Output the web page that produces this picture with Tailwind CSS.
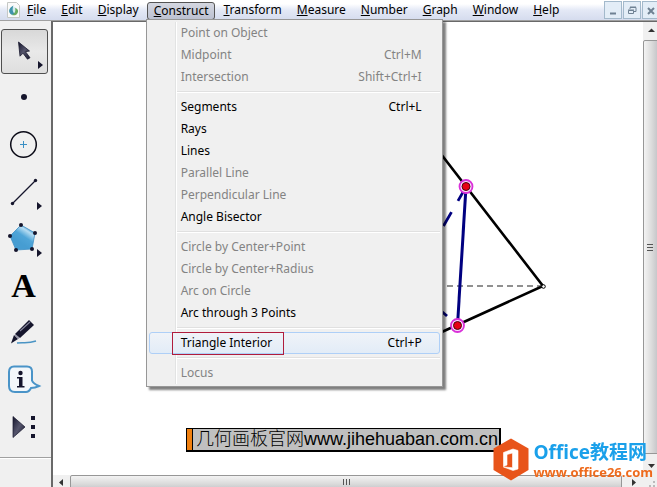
<!DOCTYPE html>
<html lang="en">
<head>
  <meta charset="UTF-8" />
  <meta name="viewport" content="width=device-width, initial-scale=1.0" />
  <title>Sketchpad</title>
  <script src="https://cdn.jsdelivr.net/npm/@tailwindcss/browser@4"></script>
</head>
<body class="h-screen flex flex-col overflow-hidden bg-[#f0f0f0] text-black text-[12px] font-['Noto_Sans','Noto_Sans_CJK_SC',sans-serif]">
  <!-- menu bar -->
  <header class="relative z-20 flex items-center h-5 shrink-0 bg-linear-to-b from-white from-20% via-[#e4e9f6] via-50% to-[#d5dcee]">
    <svg class="ml-[7px] w-[13px] h-4 shrink-0" viewBox="0 0 13 16">
      <path d="M.5.5h9l3 3v12H.5z" fill="#fafafa" stroke="#c5c8c5" />
      <circle cx="6.500" cy="9" r="4" fill="#d3ebee" />
      <path d="M6.500 3.500C3 5 1.500 8 2.500 10.500c1 2.500 4 3 5.500 1.500C5.500 10.500 5 7 6.500 3.500z" fill="#3f93ab" />
      <path d="M8 6c3.500 1 4 4 1.500 6.500-1.500 1-3.500 1-4.500.5C8 11 9 9 8 6z" fill="#67ab62" />
    </svg>
    <nav class="flex h-full items-center gap-px">
      <button class="px-[7px]"><u>F</u>ile</button>
      <button class="px-[7px]"><u>E</u>dit</button>
      <button class="px-[7px]"><u>D</u>isplay</button>
      <div class="relative h-5 flex items-center">
        <button class="px-[6px] h-[18px] mt-px border border-[#555] rounded-[3px] bg-linear-to-b from-[#d4d7e0] to-[#bcc1d1] leading-4"><u>C</u>onstruct</button>
        <!-- open menu -->
        <div class="absolute -left-px top-[19px] w-[297px] border border-[#979797] bg-[#f0f0f0] py-[2px] px-[2px] shadow-[3px_3px_2px_rgba(0,0,0,0.5)]">
          <div class="absolute left-7 inset-y-[2px] w-[2px] border-l border-[#e2e3e3] bg-white"></div>
          <ul class="relative text-[#838383]">
            <li><button class="flex justify-between items-center w-full h-[22px] pl-8 pr-[18px]" disabled>Point on Object</button></li>
            <li><button class="flex justify-between items-center w-full h-[22px] pl-8 pr-[18px]" disabled>Midpoint<span>Ctrl+M</span></button></li>
            <li><button class="flex justify-between items-center w-full h-[22px] pl-8 pr-[18px]" disabled>Intersection<span>Shift+Ctrl+I</span></button></li>
            <li class="ml-7 my-[3px] h-[2px] border-t border-[#e0e0e0] bg-white"></li>
            <li><button class="flex justify-between items-center w-full h-[22px] pl-8 pr-[18px] text-black">Segments<span>Ctrl+L</span></button></li>
            <li><button class="flex justify-between items-center w-full h-[22px] pl-8 pr-[18px] text-black">Rays</button></li>
            <li><button class="flex justify-between items-center w-full h-[22px] pl-8 pr-[18px] text-black">Lines</button></li>
            <li><button class="flex justify-between items-center w-full h-[22px] pl-8 pr-[18px]" disabled>Parallel Line</button></li>
            <li><button class="flex justify-between items-center w-full h-[22px] pl-8 pr-[18px]" disabled>Perpendicular Line</button></li>
            <li><button class="flex justify-between items-center w-full h-[22px] pl-8 pr-[18px] text-black">Angle Bisector</button></li>
            <li class="ml-7 my-[3px] h-[2px] border-t border-[#e0e0e0] bg-white"></li>
            <li><button class="flex justify-between items-center w-full h-[22px] pl-8 pr-[18px]" disabled>Circle by Center+Point</button></li>
            <li><button class="flex justify-between items-center w-full h-[22px] pl-8 pr-[18px]" disabled>Circle by Center+Radius</button></li>
            <li><button class="flex justify-between items-center w-full h-[22px] pl-8 pr-[18px]" disabled>Arc on Circle</button></li>
            <li><button class="flex justify-between items-center w-full h-[22px] pl-8 pr-[18px] text-black">Arc through 3 Points</button></li>
            <li class="ml-7 my-[3px] h-[2px] border-t border-[#e0e0e0] bg-white"></li>
            <li class="relative">
              <button class="flex justify-between items-center w-full h-[22px] pl-[31px] pr-[17px] text-black border border-[#aecff7] rounded-[3px] bg-linear-to-b from-[#f0f3f8] to-[#e2ecf7]">Triangle Interior<span>Ctrl+P</span></button>
              <span class="absolute left-[23px] top-0 w-[112px] h-[23px] border border-[#b01c3c]"></span>
            </li>
            <li class="ml-7 my-[3px] h-[2px] border-t border-[#e0e0e0] bg-white"></li>
            <li><button class="flex justify-between items-center w-full h-[22px] pl-8 pr-[18px]" disabled>Locus</button></li>
          </ul>
        </div>
      </div>
      <button class="px-[7px]"><u>T</u>ransform</button>
      <button class="px-[7px]"><u>M</u>easure</button>
      <button class="px-[7px]"><u>N</u>umber</button>
      <button class="px-[7px]"><u>G</u>raph</button>
      <button class="px-[7px]"><u>W</u>indow</button>
      <button class="px-[7px]"><u>H</u>elp</button>
    </nav>
    <div class="ml-auto -mr-[3px] flex gap-px shrink-0">
      <button aria-label="Minimize" class="w-[18px] h-[18px] border border-[#a3b9cb] bg-[#e3edf7]">
        <svg viewBox="0 0 16 16" class="w-4 h-4"><path d="M5 11.5h6" stroke="#6f8193" stroke-width="2" /></svg>
      </button>
      <button aria-label="Restore" class="w-[18px] h-[18px] border border-[#a3b9cb] bg-[#e3edf7]">
        <svg viewBox="0 0 16 16" class="w-4 h-4" fill="none" stroke="#6f8193"><path d="M6 7V5.5h6v4h-2M6 5h6" /><path d="M4.500 8.500h5v3h-5zM4 8h6" /></svg>
      </button>
      <button aria-label="Close" class="w-[18px] h-[18px] border border-[#a3b9cb] bg-[#e3edf7]">
        <svg viewBox="0 0 16 16" class="w-4 h-4"><path d="M5 6l6 6M11 6l-6 6" stroke="#6f8193" stroke-width="2" /></svg>
      </button>
    </div>
  </header>

  <div class="flex flex-1 min-h-0 border-t border-[#a0a0a0]">
    <!-- toolbox -->
    <aside class="w-[51px] shrink-0 flex flex-col">
      <button aria-label="Selection arrow" class="ml-px mt-2 w-[47px] h-[45px] border border-[#4f4f4f] rounded-[3px] bg-linear-to-b from-[#d8d8d8] via-[#e9e9e9] to-[#dedede]">
        <svg viewBox="2 30 45 43" class="w-[45px] h-[43px]">
          <defs>
            <linearGradient id="dark" x1="0" y1="0" x2="1" y2="1"><stop offset="0" stop-color="#15152c" /><stop offset=".5" stop-color="#55556c" /><stop offset="1" stop-color="#15152c" /></linearGradient>
          </defs>
          <path d="M18.500 42l11 9-4 .7 4.500 6-2.500 1.500-4.500-6-3 3z" fill="url(#dark)" stroke="#1a1a30" stroke-width=".8" />
          <path d="M38 61l5 4-5 4z" fill="#15152c" />
        </svg>
      </button>
      <button aria-label="Point" class="h-[46px]">
        <svg viewBox="0 74 51 46" class="w-[51px] h-[46px]"><circle cx="24" cy="97" r="3" fill="#15152c" /></svg>
      </button>
      <button aria-label="Compass" class="h-12">
        <svg viewBox="0 120 51 48" class="w-[51px] h-12" fill="none">
          <circle cx="23.500" cy="144.500" r="12.800" stroke="#0c0c18" stroke-width="1.500" />
          <path d="M20 144.500h7M23.500 141v7" stroke="#3a8fc4" />
        </svg>
      </button>
      <button aria-label="Straightedge" class="h-12">
        <svg viewBox="0 168 51 48" class="w-[51px] h-12" fill="#15152c">
          <path d="M12.500 203.500L35.500 180.500" stroke="#15152c" stroke-width="1.300" />
          <circle cx="12.500" cy="203.500" r="1.700" /><circle cx="35.500" cy="180.500" r="1.700" />
          <path d="M37 202l5 4-5 4z" />
        </svg>
      </button>
      <button aria-label="Polygon" class="h-12">
        <svg viewBox="0 216 51 48" class="w-[51px] h-12" fill="#15152c">
          <defs>
            <linearGradient id="blue" x1=".8" y1=".1" x2=".4" y2=".7"><stop offset="0" stop-color="#2f8bc8" /><stop offset=".25" stop-color="#b5dcf2" /><stop offset=".6" stop-color="#4fa5d8" /><stop offset="1" stop-color="#469dd2" /></linearGradient>
          </defs>
          <path d="M21 225l14 8-3 16-16 1-6-14z" fill="url(#blue)" stroke="#3d8fc5" stroke-width=".8" />
          <circle cx="21" cy="225" r="2" /><circle cx="35" cy="233" r="2" /><circle cx="32" cy="249" r="2" /><circle cx="16" cy="250" r="2" /><circle cx="10" cy="236" r="2" />
          <path d="M37 249l5 4-5 4z" />
        </svg>
      </button>
      <button aria-label="Text" class="h-11 w-[47px] text-[34px] leading-[44px] font-bold font-['Liberation_Serif',serif]">A</button>
      <button aria-label="Marker" class="h-12">
        <svg viewBox="0 308 51 48" class="w-[51px] h-12">
          <path d="M17 343c7-1 10 1 19-2" stroke="#4a94c4" stroke-width="1.500" fill="none" />
          <path d="M29 320l5 5-14 13-5-4z" fill="#15152c" />
          <path d="M14 335l4 4-7 4.500z" fill="#15152c" />
          <path d="M20 331l10-9M15 334.500l4 4" stroke="#85859a" stroke-width="1.100" />
        </svg>
      </button>
      <button aria-label="Information" class="h-12">
        <svg viewBox="0 356 51 48" class="w-[51px] h-12">
          <path d="M14 366.500h13q5 0 5 5v9q1 3 7 5.500-4 2-8 2-2 4-5 4H15q-6 0-6-6v-14q0-5.500 5-5.500z" fill="#f3f7fa" stroke="#4a94c8" stroke-width="2" />
          <circle cx="20.500" cy="373" r="2.200" fill="#15152c" />
          <path d="M17 377h5.500v9h2v1.500H17V386h2v-7.500h-2z" fill="#15152c" />
        </svg>
      </button>
      <button aria-label="Custom tools" class="h-[46px]">
        <svg viewBox="0 404 51 46" class="w-[51px] h-[46px]">
          <path d="M13 416.500l12 10.500-12 10.500z" fill="url(#dark)" stroke="#15152c" stroke-width=".7" />
          <path d="M31 416h4v4h-4zM31 425h4v4h-4zM31 434h4v4h-4z" fill="#15152c" />
        </svg>
      </button>
      <div class="mt-[7px] border-t border-[#a0a0a0] shadow-[0_1px_0_white]"></div>
    </aside>

    <main class="flex-1 min-w-0 flex flex-col border-l-2 border-t border-[#696969]">
      <div class="flex flex-1 min-h-0">
        <!-- sketch -->
        <div class="relative flex-1 bg-white overflow-hidden">
          <svg viewBox="53 22 590 453" class="absolute left-0 top-0 w-[590px] h-[453px]" fill="none">
            <path d="M400 101L543 286L400 351" stroke="#000" stroke-width="2.600" />
            <path d="M543 286H400" stroke="#222" stroke-width="1.200" stroke-dasharray="6 4" />
            <path d="M466 187L457.500 325" stroke="#000080" stroke-width="3" />
            <path d="M466 187L400 301" stroke="#000080" stroke-width="2.800" stroke-dasharray="16 13" />
            <path d="M447 316L440 310" stroke="#000080" stroke-width="2.800" />
            <circle cx="543.500" cy="286.500" r="1.800" fill="#fff" stroke="#000" />
            <circle cx="466" cy="186.500" r="6.500" fill="#fbe3fb" stroke="#d930d9" stroke-width="1.800" />
            <circle cx="466" cy="186.500" r="4" fill="#e60012" stroke="#4a0010" />
            <circle cx="457.500" cy="325.500" r="6.500" fill="#fbe3fb" stroke="#d930d9" stroke-width="1.800" />
            <circle cx="457.500" cy="325.500" r="4" fill="#e60012" stroke="#4a0010" />
          </svg>
          <div class="absolute left-[133px] top-[406px] h-6 flex border border-b-2 border-r-2 border-black bg-[#c0c0c0] text-[18px] leading-[21px] whitespace-nowrap font-['Liberation_Sans','Noto_Sans_CJK_SC',sans-serif]">
            <span class="w-[6px] bg-[#f08010] border-r border-black"></span>
            <span class="pl-[3px] pr-px"><span class="font-light">几何画板官网</span>www.jihehuaban.com.cn</span>
          </div>
        </div>
        <!-- vertical scrollbar -->
        <div class="w-[14px] shrink-0 flex flex-col bg-[#f0f0f0] overflow-hidden">
          <svg viewBox="0 0 14 18" class="w-[14px] h-[18px] shrink-0"><path d="M5 10l3.500-3.500L12 10z" fill="#333" /></svg>
          <div class="w-[17px] flex-1 flex items-center justify-center border border-[#979797] rounded-[2px] bg-linear-to-r from-[#f3f3f3] via-[#dcdcdc] to-[#c0c0c4]">
            <svg viewBox="0 0 8 9" class="w-2 h-[9px] mr-[3px]" stroke="#555"><path d="M1 1.500h6M1 4.500h6M1 7.500h6" /></svg>
          </div>
          <svg viewBox="0 0 14 21" class="w-[14px] h-[21px] shrink-0"><path d="M5 10h7l-3.500 4z" fill="#333" /></svg>
        </div>
      </div>
      <!-- horizontal scrollbar -->
      <div class="h-3 shrink-0 flex bg-[#f0f0f0] overflow-hidden">
        <svg viewBox="0 0 17 12" class="w-[17px] h-3 shrink-0"><path d="M10 4v7L6 7.500z" fill="#333" /></svg>
        <div class="flex-1 h-[17px] flex justify-center border border-[#979797] rounded-[2px] bg-linear-to-b from-[#f3f3f3] via-[#dcdcdc] to-[#c0c0c4]">
          <svg viewBox="0 0 9 8" class="w-[9px] h-2 mt-[2px]" stroke="#555"><path d="M1.500 1v6M4.500 1v6M7.500 1v6" /></svg>
        </div>
        <svg viewBox="0 0 35 12" class="w-[35px] h-3 shrink-0"><path d="M10 4v7l4-3.500z" fill="#333" /><path d="M31 6h2v2h-2zM31 10h2v2h-2zM27 10h2v2h-2z" fill="#bbb" /></svg>
      </div>
    </main>
  </div>

  <!-- site badge -->
  <a href="#" class="fixed right-1 bottom-[6px] z-30 flex items-center gap-1 font-bold whitespace-nowrap font-['Open_Sans','Noto_Sans_CJK_SC',sans-serif]">
    <svg viewBox="494 438 36 43" class="w-9 h-[43px]">
      <path d="M512 438.500l17.500 10v21.500L512 480.500 494.500 470v-21.500z" fill="#e8541a" />
      <path d="M504.500 452.500l9.500-3.500 5 1.500v18.500l-5 1.500-9.500-3.500 9 .7V453l-5.500 1.500v10.500l-3.500 1.500z" fill="#fff" stroke="#fff" stroke-width=".6" />
    </svg>
    <span class="flex flex-col">
      <span class="text-[19px] leading-6 text-[#1aa0ea]">Office教程网</span>
      <span class="text-[13px] leading-4 text-[#ee6a1c]">www.office26.com</span>
    </span>
  </a>
</body>
</html>
